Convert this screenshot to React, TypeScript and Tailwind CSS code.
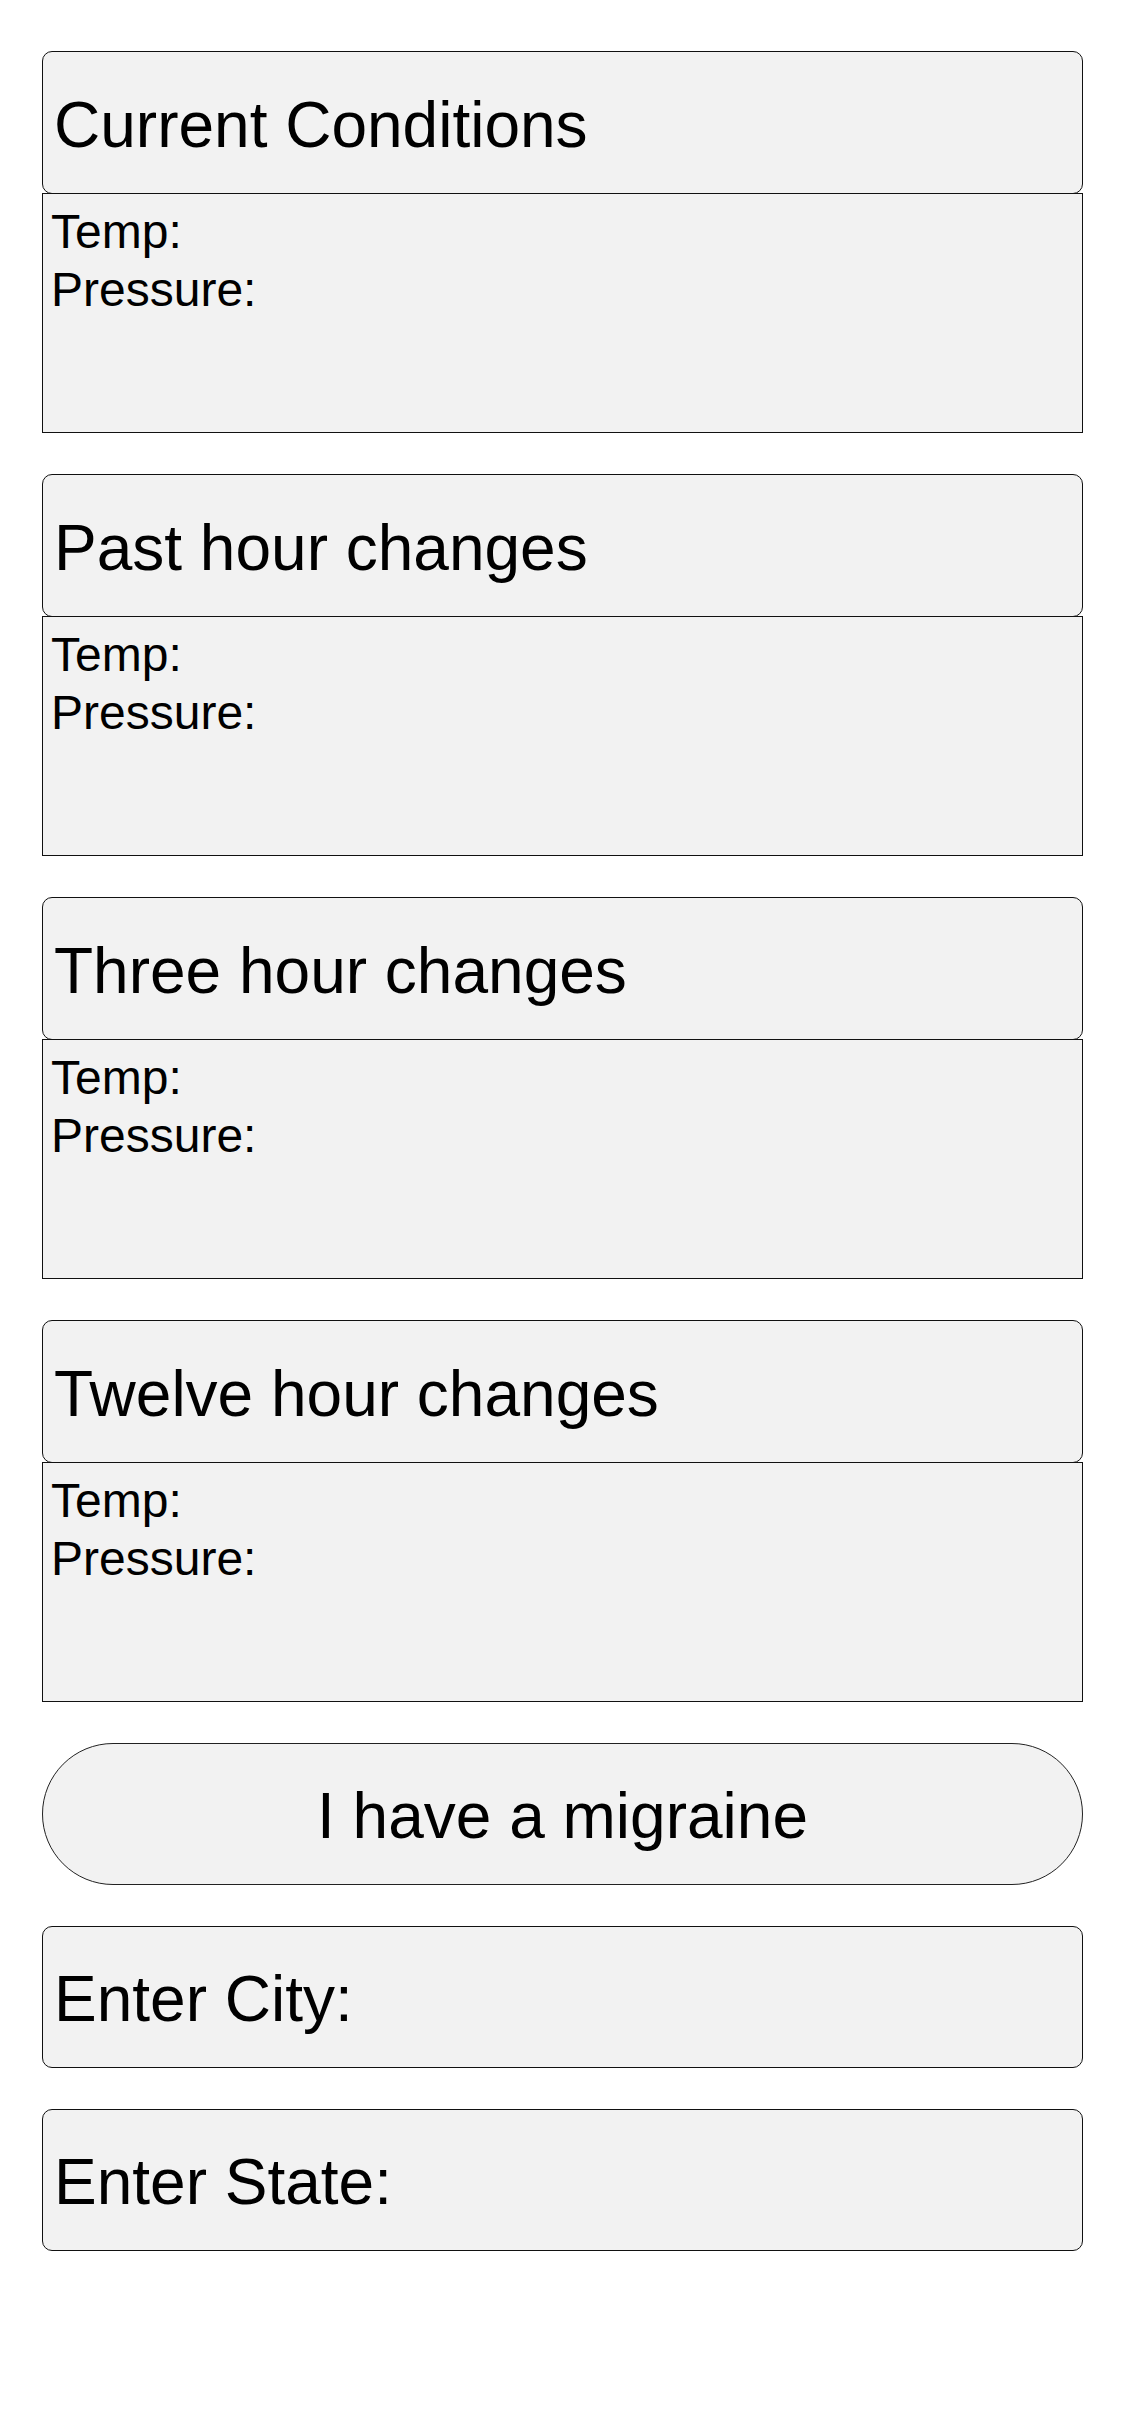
import React from "react";

const font = { fontFamily: '"Liberation Sans", Arial, sans-serif' };

function Section({ title }: { title: string }) {
  return (
    <div className="flex flex-col">
      <div className="flex h-[143px] items-center rounded-[10px] border border-[#111] bg-[#f2f2f2] pl-[11px] pt-[4px]">
        <span className="text-[64px] leading-none text-black">{title}</span>
      </div>
      <div className="-mt-px flex h-[240px] flex-col border border-[#111] bg-[#f2f2f2] pl-[8px] pt-[9px]">
        <span className="text-[48px] leading-[58px] text-black">Temp:</span>
        <span className="text-[48px] leading-[58px] text-black">Pressure:</span>
      </div>
    </div>
  );
}

export default function App() {
  return (
    <div className="min-h-[2436px] w-[1125px] bg-white" style={font}>
      <div className="flex flex-col gap-[41px] px-[42px] pt-[51px]">
        <Section title="Current Conditions" />
        <Section title="Past hour changes" />
        <Section title="Three hour changes" />
        <Section title="Twelve hour changes" />
        <button
          type="button"
          className="flex h-[142px] items-center justify-center rounded-full border border-[#222] bg-[#f2f2f2] pt-[4px] text-[64px] leading-none text-black"
          style={font}
        >
          I have a migraine
        </button>
        <div className="flex h-[142px] items-center rounded-[10px] border border-[#111] bg-[#f2f2f2] pl-[11px] pt-[4px]">
          <span className="text-[64px] leading-none text-black">Enter City:</span>
        </div>
        <div className="flex h-[142px] items-center rounded-[10px] border border-[#111] bg-[#f2f2f2] pl-[11px] pt-[4px]">
          <span className="text-[64px] leading-none text-black">Enter State:</span>
        </div>
      </div>
    </div>
  );
}
